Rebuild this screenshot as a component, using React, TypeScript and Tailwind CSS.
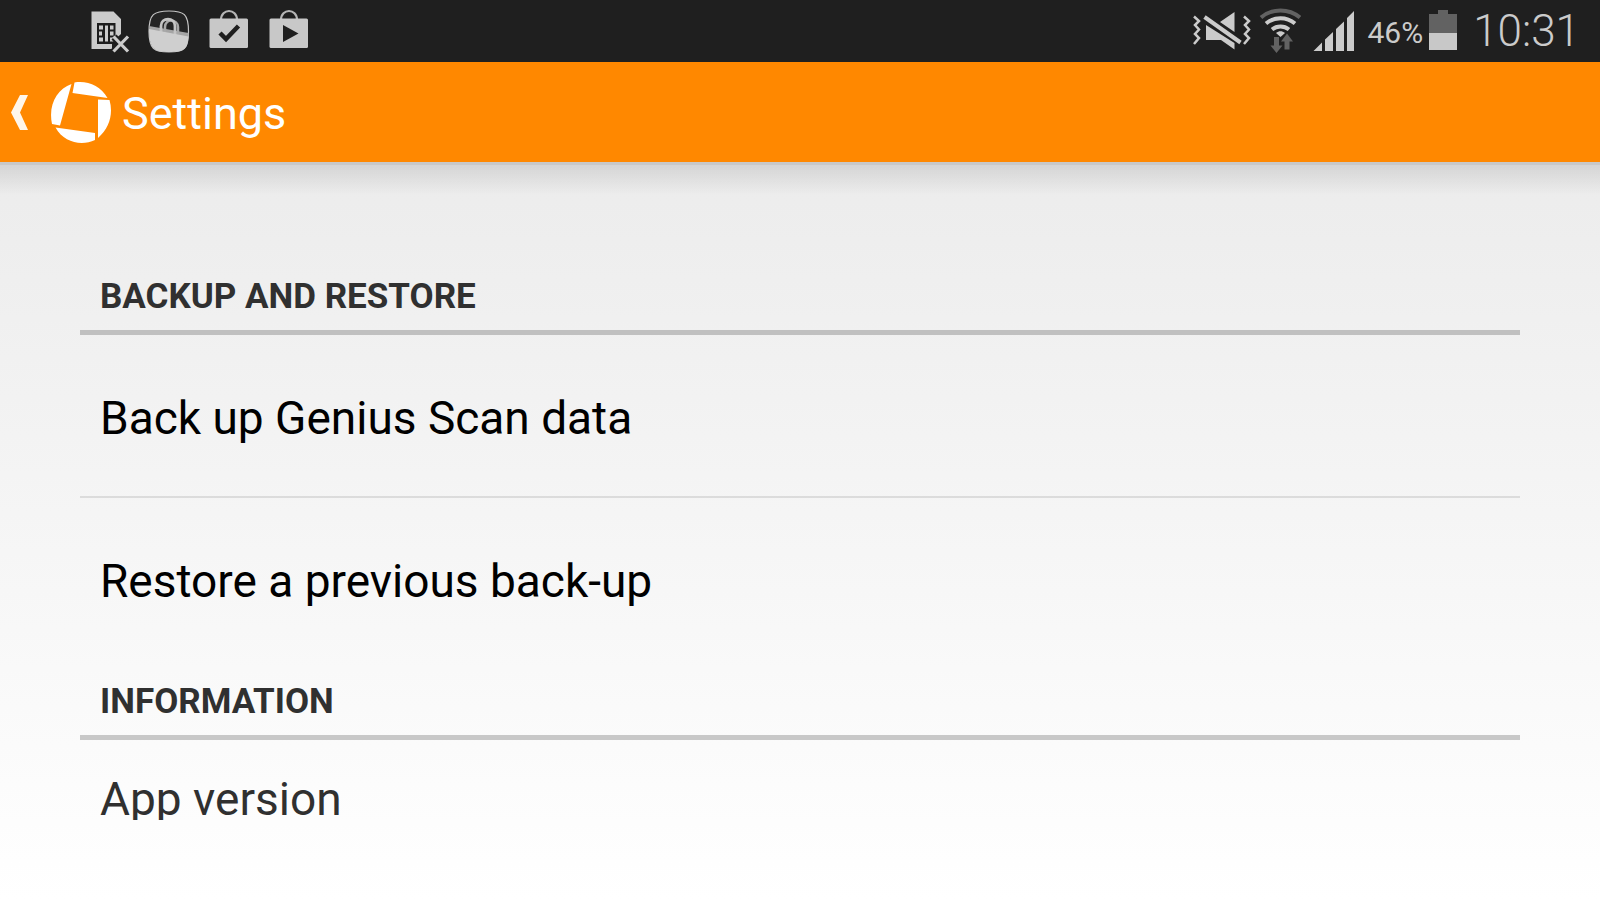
import React from "react";

function SimErrorIcon() {
  return (
    <svg width="38" height="46" viewBox="90 8 38 46" className="overflow-visible" aria-hidden="true">
      <path d="M91.500 11.500h22l7.500 7.500v15l-9 8v7H91.500z" fill="#cbcbcb" />
      <path d="M97 23h18.500v21H97z" fill="#1c1c1c" />
      <path d="M99 25.500h4v4h-4zM99 31.500h3v4h-3zM99 37.500h4v4h-4zM105 25.500h3v16h-3zM110 25.500h3.500v4H110zM110 31.500h3.500v4H110zM110 37.500h3.500v4H110z" fill="#cbcbcb" />
      <path d="M114 37l13.500 14M127.500 37L114 51" stroke="#1f1f1f" strokeWidth="7" />
      <path d="M113.500 36.500l14.500 15M128 36.500l-14.500 15" stroke="#cbcbcb" strokeWidth="3.200" />
    </svg>
  );
}

function PadlockIcon() {
  return (
    <svg width="41" height="46" viewBox="148 8 41 46" className="overflow-visible" aria-hidden="true">
      <path d="M169 11c15 0 19.500 3 19.500 20.500S184 52 169 52s-20-3-20-20.500S154 11 169 11z" fill="#242424" stroke="#c4c4c4" strokeWidth="1.200" />
      <path d="M149 26l39.500 7-.500 5L149 30z" fill="#a5a5a5" />
      <path d="M165 32v-5c0-9 13-8 13 0v7" stroke="#a9a9a9" strokeWidth="2.500" fill="none" />
      <path d="M161 32v-6c0-9 14-9 14 0v9" stroke="#c4c4c4" strokeWidth="2.800" fill="none" />
      <path d="M149 29l39.500 7.500C188 49 184 52 169 52s-19.800-3-20-23z" fill="#cfcfcf" />
    </svg>
  );
}

function BagIcon({ mark }: { mark: "check" | "play" }) {
  return (
    <svg width="40" height="46" viewBox="209 8 40 46" aria-hidden="true">
      <path d="M221 20c0-12 16-12 16 0" stroke="#b5b5b5" strokeWidth="2.200" fill="none" />
      <rect x="209.500" y="18.500" width="38.500" height="29.500" rx="1.500" fill="#c8c8c8" />
      {mark === "check" ? (
        <path d="M220 33l6 6 12.500-13" stroke="#1f1f1f" strokeWidth="4.500" fill="none" />
      ) : (
        <path d="M223 25l15.500 8.500L223 42z" fill="#1f1f1f" />
      )}
    </svg>
  );
}

function VibrateMuteIcon() {
  return (
    <svg width="58" height="46" viewBox="1193 8 58 46" aria-hidden="true">
      <path d="M1194 16.500l5 4.500-4 4 4 4.500-4 4.500 4 4-5 6M1244 16.500l5 4.500-4 4 4 4.500-4 4.500 4 4-5 6" stroke="#cbcbcb" strokeWidth="2.500" fill="none" />
      <path d="M1206 25v15h15l13.500 9.500v-6.500zM1220 22l14.500-10v20z" fill="#cbcbcb" />
      <path d="M1205 17l36 25.500" stroke="#1f1f1f" strokeWidth="7" />
      <path d="M1204.500 17l36 25.500" stroke="#cbcbcb" strokeWidth="4" />
    </svg>
  );
}

function WifiIcon() {
  return (
    <svg width="42" height="46" viewBox="1258 8 42 46" aria-hidden="true">
      <path d="M1260 17.500c11-9.500 28-9.500 39 0" stroke="#626262" strokeWidth="4" fill="none" />
      <path d="M1265 23.500c8.500-7 20.500-7 29 0M1271 29.500c5-4 12-4 17 0" stroke="#cbcbcb" strokeWidth="4" fill="none" />
      <path d="M1275 33c3-2.500 6-2.500 9 0l-4.500 4z" fill="#cbcbcb" />
      <path d="M1273 37h5v8.500h3.500l-6 7.500-6-7.500h3.500z" fill="#626262" />
      <path d="M1283.500 49.500v-8H1280l6-8 6 8h-3.500v8z" fill="#626262" />
    </svg>
  );
}

function SignalIcon() {
  return (
    <svg width="42" height="46" viewBox="1311 8 42 46" aria-hidden="true">
      <path d="M1311.500 51l8.500-8.500V51zM1323 39.500l8-7.500v19h-8zM1334 29l8-7.500V51h-8zM1345 18l7-7v40h-7z" fill="#cbcbcb" />
    </svg>
  );
}

function BatteryIcon() {
  return (
    <svg width="28" height="46" viewBox="1429 8 28 46" aria-hidden="true">
      <path d="M1429 14h9v-4h10v4h9v19h-28z" fill="#626262" />
      <path d="M1429 33h28v17h-28z" fill="#c8c8c8" />
    </svg>
  );
}

function StatusBar() {
  return (
    <div className="flex h-[62px] shrink-0 items-center justify-between bg-[#1f1f1f] pr-5 pl-[90px] text-[#cbcbcb]">
      <div className="flex items-center gap-5">
        <SimErrorIcon />
        <PadlockIcon />
        <BagIcon mark="check" />
        <BagIcon mark="play" />
      </div>
      <div className="flex items-center">
        <div className="flex items-center gap-2">
          <VibrateMuteIcon />
          <WifiIcon />
        </div>
        <div className="ml-3 flex items-center gap-3">
          <SignalIcon />
          <div className="flex items-center gap-1.5">
            <span className="pt-1 text-[30px] leading-10">46%</span>
            <BatteryIcon />
          </div>
        </div>
        <time className="ml-4 text-[44px] leading-[62px] font-light">10:31</time>
      </div>
    </div>
  );
}

function ActionBar() {
  return (
    <header className="h-[100px] shrink-0 bg-[#ff8800]">
      <a href="#back" aria-label="Navigate up, Settings" className="flex h-full w-fit items-center pl-2 text-white">
        <svg width="114" height="64" viewBox="8 80 114 64" aria-hidden="true">
          <path d="M20 95h8l-8 17.500 8 17.500h-8l-9-17.500z" fill="#fff6ea" />
          <path d="M71.500 84C57 89 48 105 52 124l8 1.500zM74.500 82.500c13-2 26 3 33 15.500l-35-5zM98 99.500l11.500.500c4 14 0 28-11.500 38zM55.500 127.500l39.500 5.500v7c-13 6-31 3-39.500-12.500z" fill="#fff" />
        </svg>
        <h1 className="pt-1 text-[45px] leading-[54px] font-normal">Settings</h1>
      </a>
    </header>
  );
}

function Section({ title, children }: { title: string; children: React.ReactNode }) {
  return (
    <section>
      <h2 className="border-b-[5px] border-black/20 px-5 pt-[23px] pb-[13px] text-[35px] leading-10 font-bold text-[#303030] uppercase">
        {title}
      </h2>
      {children}
    </section>
  );
}

function PreferenceRow({ label }: { label: string }) {
  return (
    <li className="border-b-2 border-black/10 last:border-b-0">
      <button type="button" className="block w-full px-5 pt-[57px] pb-[52px] text-left text-[46px] leading-[52px] text-black">
        {label}
      </button>
    </li>
  );
}

export default function App() {
  return (
    <div className="flex h-screen flex-col font-[Roboto,sans-serif]">
      <StatusBar />
      <ActionBar />
      <main className="flex min-h-0 flex-1 flex-col bg-linear-to-b from-[#ececec] to-white pb-20">
        <div className="h-[3px] shrink-0 bg-[#c8c8c8]" />
        <div className="h-[30px] shrink-0 bg-linear-to-b from-black/10 to-transparent" />
        <div className="mx-20 min-h-0 flex-1 overflow-y-auto pt-[59px] [scrollbar-width:none]">
          <Section title="Backup and restore">
            <ul>
              <PreferenceRow label="Back up Genius Scan data" />
              <PreferenceRow label="Restore a previous back-up" />
            </ul>
          </Section>
          <Section title="Information">
            <p className="px-5 pt-[33px] pb-[52px] text-[46px] leading-[52px] text-[#303030]">App version</p>
          </Section>
        </div>
      </main>
    </div>
  );
}
